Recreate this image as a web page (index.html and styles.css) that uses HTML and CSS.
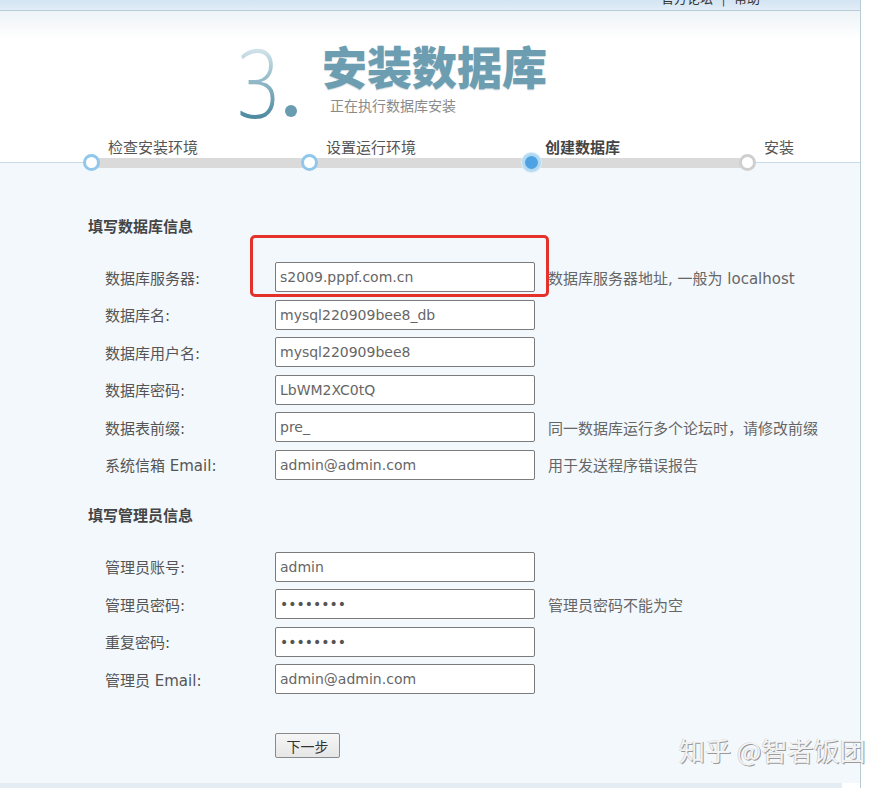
FILE: index.html
```html
<!DOCTYPE html>
<html lang="zh-CN">
<head>
<meta charset="utf-8">
<title>安装数据库</title>
<link rel="stylesheet" href="styles.css">
</head>
<body>
<div class="page">
  <div class="topbar"><span class="topbar-text">官方论坛 &nbsp; | &nbsp; 帮助</span></div>
  <div class="top">
    <div class="hero">
      <div class="num"><span class="num-3">3</span><span class="num-dot"></span></div>
      <div class="hero-text">
        <h1 class="hero-title">安装数据库</h1>
        <p class="hero-sub">正在执行数据库安装</p>
      </div>
    </div>
    <div class="step-labels">
      <span class="step-label">检查安装环境</span>
      <span class="step-label">设置运行环境</span>
      <span class="step-label current">创建数据库</span>
      <span class="step-label">安装</span>
    </div>
  </div>
  <div class="track-wrap">
    <div class="track">
      <span class="dot done"></span><span class="seg seg1"></span>
      <span class="dot done"></span><span class="seg seg2"></span>
      <span class="dot active"></span><span class="seg seg3"></span>
      <span class="dot todo"></span>
    </div>
  </div>
  <div class="form">
    <h3 class="group-title first">填写数据库信息</h3>
    <div class="rows">
      <label class="lbl">数据库服务器:</label><input class="inp" type="text" value="s2009.pppf.com.cn"><span class="hint">数据库服务器地址, 一般为 localhost</span>
      <label class="lbl">数据库名:</label><input class="inp" type="text" value="mysql220909bee8_db"><span class="hint"></span>
      <label class="lbl">数据库用户名:</label><input class="inp" type="text" value="mysql220909bee8"><span class="hint"></span>
      <label class="lbl">数据库密码:</label><input class="inp" type="text" value="LbWM2XC0tQ"><span class="hint"></span>
      <label class="lbl">数据表前缀:</label><input class="inp" type="text" value="pre_"><span class="hint">同一数据库运行多个论坛时，请修改前缀</span>
      <label class="lbl">系统信箱 Email:</label><input class="inp" type="text" value="admin@admin.com"><span class="hint">用于发送程序错误报告</span>
    </div>
    <h3 class="group-title second">填写管理员信息</h3>
    <div class="rows">
      <label class="lbl">管理员账号:</label><input class="inp" type="text" value="admin"><span class="hint"></span>
      <label class="lbl">管理员密码:</label><input class="inp pw" type="password" value="12345678"><span class="hint">管理员密码不能为空</span>
      <label class="lbl">重复密码:</label><input class="inp pw" type="password" value="12345678"><span class="hint"></span>
      <label class="lbl">管理员 Email:</label><input class="inp" type="text" value="admin@admin.com"><span class="hint"></span>
    </div>
    <div class="actions"><button class="btn" type="button">下一步</button></div>
  </div>
  <div class="bottom-band"></div>
</div>
<div class="annot"></div>
<div class="watermark">知乎 @智者饭团</div>
</body>
</html>
```
FILE: styles.css
```css
html, body {
  margin: 0;
  padding: 0;
  background: #ffffff;
}
body {
  position: relative;
  width: 893px;
  height: 788px;
  overflow: hidden;
  font-family: "DejaVu Sans", "Noto Sans CJK SC", sans-serif;
}
.page {
  width: 860px;
  height: 788px;
  border-right: 1px solid #b7ccd5;
  background: #ffffff;
}
.topbar {
  height: 10px;
  border-bottom: 1px solid #b9cdd9;
  background: linear-gradient(#d3e4f2, #e2edf7);
  overflow: hidden;
  display: flex;
  justify-content: flex-end;
  padding-right: 100px;
}
.topbar-text {
  font-family: "Noto Sans CJK SC", sans-serif;
  font-size: 13px;
  line-height: 13px;
  color: #333;
  margin-top: -9px;
}
.top {
  background: linear-gradient(#edf3f7 0, #ffffff 28px);
}
.hero {
  display: flex;
  padding-left: 237px;
  height: 115px;
}
.num {
  width: 85px;
  flex: none;
  position: relative;
  margin-top: 22px;
  height: 96px;
}
.num-3 {
  display: inline-block;
  font-family: "Open Sans", "Liberation Sans", sans-serif;
  font-weight: 300;
  font-size: 96px;
  line-height: 96px;
  transform: scaleX(0.78);
  transform-origin: left center;
  background: linear-gradient(#dbe9ef 12%, #92b9c8 50%, #4d8aa0 88%);
  -webkit-background-clip: text;
  background-clip: text;
  color: transparent;
}
.num-dot {
  position: absolute;
  left: 48px;
  top: 72px;
  width: 12px;
  height: 12px;
  border-radius: 50%;
  background: #6a9cb0;
}
.hero-text {
  display: flex;
  flex-direction: column;
}
.hero-title {
  margin: 32px 0 0 0;
  font-family: "Noto Sans CJK SC", sans-serif;
  font-weight: 900;
  font-size: 45px;
  line-height: 45px;
  color: #6d9db1;
  text-shadow: 0 1px 1px rgba(60, 100, 120, 0.25);
}
.hero-sub {
  margin: 8px 0 0 8px;
  font-family: "Noto Sans CJK SC", sans-serif;
  font-size: 14px;
  line-height: 18px;
  color: #8a8a8a;
}
.step-labels {
  display: grid;
  grid-template-columns: 218px 219px 219px auto;
  padding-left: 108px;
  margin-top: 12px;
  height: 18px;
}
.step-label {
  font-family: "Noto Sans CJK SC", sans-serif;
  font-size: 15px;
  line-height: 18px;
  color: #555;
}
.step-label.current {
  font-weight: bold;
  color: #444;
}
.track-wrap {
  height: 17px;
  margin-top: -2px;
  background: linear-gradient(#ffffff 0, #ffffff 8px, #c8dde7 8px, #c8dde7 9px, #f3f8fc 9px);
}
.track {
  display: flex;
  align-items: center;
  height: 17px;
  padding-left: 83px;
}
.seg {
  height: 10px;
  background: #dadada;
  margin: 0 -2px;
}
.seg1 { width: 205px; }
.seg2 { width: 209px; }
.seg3 { width: 203px; }
.dot {
  width: 11px;
  height: 11px;
  border-radius: 50%;
  background: #fff;
  border: 3px solid #91c7ea;
  position: relative;
  z-index: 1;
  flex: none;
}
.dot.active {
  width: 13px;
  height: 13px;
  margin: 0 -1px;
  background: #4ea2e2;
  border: 3px solid #b4daf3;
  box-shadow: 0 0 0 1px #d7ecf9;
}
.dot.todo {
  border-color: #cfcfcf;
}
.form {
  background: #f3f8fc;
  padding-left: 88px;
  height: 612px;
  box-sizing: border-box;
}
.group-title {
  margin: 0;
  font-family: "Noto Sans CJK SC", sans-serif;
  font-size: 15px;
  line-height: 20px;
  font-weight: bold;
  color: #454545;
}
.group-title.first { padding-top: 45px; }
.group-title.second { margin-top: 25px; }
.rows {
  display: grid;
  grid-template-columns: 157px 260px auto;
  grid-auto-rows: 30px;
  row-gap: 7.5px;
  column-gap: 13px;
  padding-left: 17px;
  margin-top: 26px;
  align-items: center;
}
.group-title.second + .rows { margin-top: 27px; }
.lbl {
  font-size: 15px;
  color: #555;
  white-space: nowrap;
}
.inp {
  box-sizing: border-box;
  width: 260px;
  height: 30px;
  margin: 0;
  border: 1px solid #7b7b7b;
  border-radius: 2px;
  background: #fff;
  padding: 0 4px;
  font-family: "DejaVu Sans", "Noto Sans CJK SC", sans-serif;
  font-size: 14px;
  color: #666;
  outline: none;
}
.inp.pw {
  font-size: 14px;
  color: #555;
}
.hint {
  font-size: 15px;
  color: #666;
  white-space: nowrap;
}
.actions {
  padding-left: 187px;
  margin-top: 39px;
}
.btn {
  width: 65px;
  height: 25px;
  padding: 0;
  border: 1px solid #8a8a8a;
  border-radius: 2px;
  background: linear-gradient(#f6f6f6, #e6e6e6);
  font-family: "Noto Sans CJK SC", sans-serif;
  font-size: 14px;
  color: #333;
}
.bottom-band {
  width: 842px;
  height: 5px;
  background: #e4edf4;
}
.annot {
  position: absolute;
  left: 250px;
  top: 235px;
  width: 293px;
  height: 56px;
  border: 3px solid #e4322b;
  border-radius: 5px;
}
.watermark {
  position: absolute;
  left: 679px;
  top: 733px;
  font-family: "Noto Sans CJK SC", sans-serif;
  font-size: 26px;
  line-height: 34px;
  color: #f4f4f4;
  text-shadow: 1px 1px 0 #9a9a9a, -0.5px -0.5px 0 #c4c4c4;
  white-space: nowrap;
}
```
